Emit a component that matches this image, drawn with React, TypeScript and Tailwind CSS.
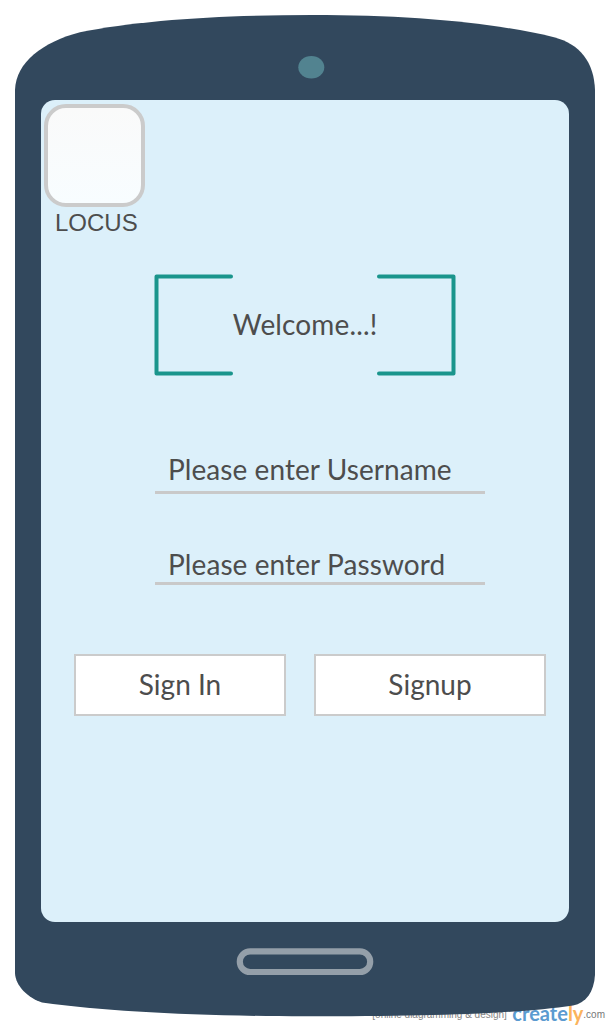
function PhoneBody() {
  return (
    <svg className="absolute inset-0" width="610" height="1030" viewBox="0 0 610 1030" aria-hidden="true">
      <path
        fill="#32485d"
        d="M15 90C16 62 43 42 80 32.300C140 20 225 15 312 15C410 15 490 22 554 37.200C580 44 594 62 595 90V975C594 992 586 1003 573 1005.500C515 1014 430 1016.300 305 1016.300C190 1016 110 1011.500 42 1002.500C28 998 15.500 986 15 973Z"
      />
      <ellipse cx="311.300" cy="67.300" rx="13" ry="11.300" fill="#528390" />
      <rect x="239.800" y="951.300" width="130.400" height="20.700" rx="10.350" fill="none" stroke="#949fa9" strokeWidth="6.200" />
    </svg>
  );
}

function Watermark() {
  return (
    <div className="absolute right-[5px] bottom-0 flex h-[30px] items-start whitespace-nowrap">
      <span className="w-[135px] font-['Liberation_Sans',sans-serif] text-[10px] leading-[30px] text-[#858585]">
        [online diagramming &amp; design]
      </span>
      <span className="mt-[-2px] ml-[5px] w-[71px] font-['Lato',sans-serif] text-[20px] leading-[30px] font-bold text-[#5b9bd0]">
        create<span className="text-[#fbb35c]">ly</span>
      </span>
      <span className="font-['Liberation_Sans',sans-serif] text-[10px] leading-[30px] text-[#777777]">.com</span>
    </div>
  );
}

function WelcomeFrame() {
  return (
    <div className="relative mt-[37px] ml-[113px] flex h-[102px] w-[302px] justify-center pt-[33px]">
      <svg className="absolute inset-0" width="302" height="102" viewBox="0 0 302 102" aria-hidden="true">
        <g fill="none" stroke="#1a958c" strokeWidth="4" strokeLinecap="round" strokeLinejoin="round">
          <path d="M77 2.500H2.500V99.500H77" />
          <path d="M225 2.500H299.500V99.500H225" />
        </g>
      </svg>
      <h1 className="pl-[1px] text-[28px] leading-[34px] tracking-[0.14px]">Welcome...!</h1>
    </div>
  );
}

export default function App() {
  return (
    <main className="relative isolate h-[1030px] w-[610px] overflow-hidden bg-white font-['Lato',sans-serif] text-[#4d4d4d]">
      <Watermark />
      <PhoneBody />
      <div className="relative flex flex-col pt-[100.300px] pl-[40.600px]">
        <section className="flex h-[821.500px] w-[528.900px] flex-col rounded-[14px] bg-[#dcf0fa]">
          <div className="mt-[4px] ml-[3.600px] h-[103px] w-[101px] rounded-[22px] border-4 border-[#cbcbcb] bg-linear-to-b from-[#fafafa] to-[#f8fdff]" />
          <div className="ml-[14.400px] h-[30px] font-['Liberation_Sans',sans-serif] text-[24px] leading-[31px]">LOCUS</div>
          <WelcomeFrame />
          <div className="mt-[76px] ml-[114.400px] h-[42px] w-[330px] border-b-3 border-[#c9c9c9] pl-[13px] text-[28px] leading-[34px] tracking-[0.07px]">
            Please enter Username
          </div>
          <div className="mt-[53px] ml-[114.400px] h-[38px] w-[330px] border-b-3 border-[#c9c9c9] pl-[13px] text-[28px] leading-[34px] tracking-[0.09px]">
            Please enter Password
          </div>
          <div className="mt-[69px] ml-[33.400px] flex gap-[28px]">
            <button className="h-[62px] w-[212px] border-2 border-[#cbcbcb] bg-white pb-[2px] text-[28px] leading-[34px]">Sign In</button>
            <button className="h-[62px] w-[232px] border-2 border-[#cbcbcb] bg-white pb-[2px] text-[28px] leading-[34px]">Signup</button>
          </div>
        </section>
      </div>
    </main>
  );
}
